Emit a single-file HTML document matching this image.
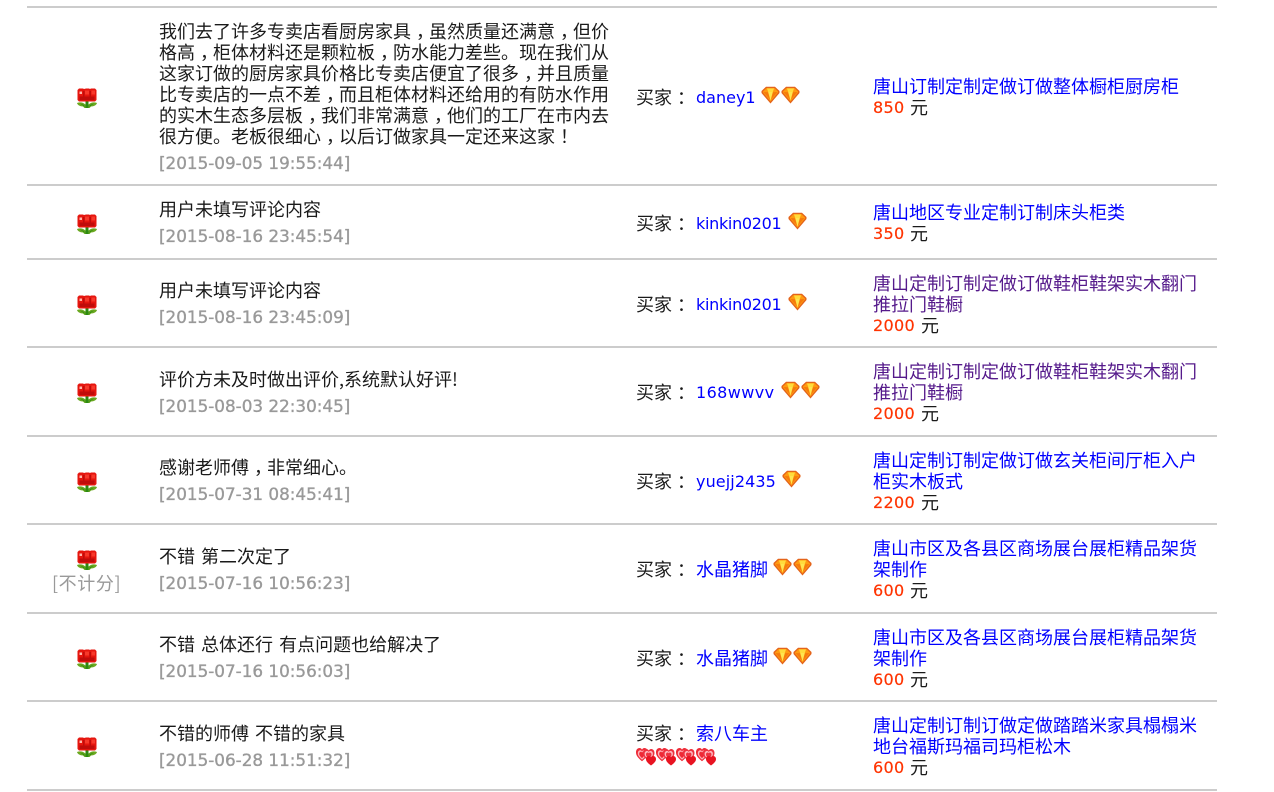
<!DOCTYPE html>
<html><head><meta charset="utf-8"><style>
html,body{margin:0;padding:0;background:#fff}
body{width:1274px;height:792px;overflow:hidden;position:relative;font-family:"DejaVu Sans","Noto Sans CJK SC",sans-serif;font-size:16px;color:#1a1a1a}
.l{position:absolute;left:27px;width:1190px;height:2px;background:#ccc}
.t{position:absolute;white-space:nowrap;line-height:21px;height:21px}
.c{font-family:"Noto Sans CJK SC",sans-serif;font-size:18px;word-spacing:2px}
.c i{font-style:normal;position:relative;left:5px}
.d{color:#999;font-size:16.8px;-webkit-text-stroke:.35px #999}
.b{color:#00f}.v{color:#551a8b}
.r{color:#f30;letter-spacing:.3px;-webkit-text-stroke:.2px #f30}
.k{letter-spacing:-.3px}
svg{position:absolute}
</style></head><body>
<svg width="0" height="0" style="position:absolute"><defs>
<g id="f">
<path fill="#6aa820" d="M0 15c3-1.200 6-.8 8.500 1.500l.5 3.500h2l.5-3.500c2.500-2.300 5.500-2.700 8.500-1.500-.5 2-3 3.500-6 3.500l-1.500 1.500H7.500L6 18.500c-3 0-5.500-1.500-6-3.500z"/>
<path fill="#2c8a12" d="M8.500 13h3v7h-3zM3 15.500l4 1.500 1 2zM17 15.500l-4 1.500-1 2z"/>
<path fill="#e5150e" d="M.5 2 2 .5h4l1 .5 2-.5h3l1 .5 1-.5h4L19.500 2v10l-1.500 1.500H2L.5 12z"/>
<path fill="#c00c0a" d="M2.500 8.500h15v3.500h-15zM6 3h1.500v5.500H6zM12.500 3H14v5.500h-1.500z"/>
<path fill="#f7382a" d="M8 2.500h4v4H8zM14.500 2.500H18v4h-3.500z"/>
<path fill="#ffb8ac" d="M2.500 3.500h2.500v2.500H2.500z"/>
</g>
<g id="g">
<path fill="#e4641a" d="M.5 5 5 .8h9L18.500 5v2l-9 10.500L.5 7z"/>
<path fill="#ff9a10" d="M2 5.500 5.600 2h7.800L17 5.500v1l-7.500 9-7.500-9z"/>
<path fill="#ffdc3c" d="M6 2.500h7L11.800 6H7.200z"/>
<path fill="#ffe650" d="M7.200 6h4.600l-2.300 8.500z"/>
<path fill="#f57a0c" d="M2.500 6 7 6.200l2 7.300zM16.500 6 12 6.200l-2 7.300z"/>
</g>
<path id="hp" d="M5 9.500C1 6.500 0 5 0 3 0 1 1.500 0 3 0c1 0 1.600.5 2 1.200C5.400.5 6 0 7 0c1.500 0 3 1 3 3 0 2-1 3.500-5 6.500z"/>
<g id="h">
<use href="#hp" transform="scale(1.2 1.4)" fill="#ee2a36"/>
<use href="#hp" transform="translate(1.800 2.200) scale(.85 1)" fill="#ffb0b8"/>
<use href="#hp" transform="translate(3.200 3.800) scale(.57 .66)" fill="#ee2a36"/>
<use href="#hp" transform="translate(7 1) scale(1.15 1.3)" fill="#ee3340"/>
<use href="#hp" transform="translate(8.600 3) scale(.83 .92)" fill="#ffb8c0"/>
<use href="#hp" transform="translate(10 4.500) scale(.55 .62)" fill="#ee3340"/>
<use href="#hp" transform="translate(10 8) scale(1 1)" fill="#e81422"/>
</g>
</defs></svg>
<div class="l" style="top:6px"></div><div class="l" style="top:184px"></div><div class="l" style="top:258px"></div><div class="l" style="top:346px"></div><div class="l" style="top:435px"></div><div class="l" style="top:523px"></div><div class="l" style="top:612px"></div><div class="l" style="top:700px"></div><div class="l" style="top:789px"></div>

<svg style="left:77px;top:88px" width="20" height="20"><use href="#f"/></svg>
<svg style="left:77px;top:214px" width="20" height="20"><use href="#f"/></svg>
<svg style="left:77px;top:295px" width="20" height="20"><use href="#f"/></svg>
<svg style="left:77px;top:383px" width="20" height="20"><use href="#f"/></svg>
<svg style="left:77px;top:472px" width="20" height="20"><use href="#f"/></svg>
<svg style="left:77px;top:550px" width="20" height="20"><use href="#f"/></svg>
<svg style="left:77px;top:649px" width="20" height="20"><use href="#f"/></svg>
<svg style="left:77px;top:737px" width="20" height="20"><use href="#f"/></svg>
<div class="t c" style="left:52px;top:573px;color:#999;letter-spacing:.6px">[不计分]</div>

<div class="t c" style="left:159px;top:21px">我们去了许多专卖店看厨房家具<i>，</i>虽然质量还满意<i>，</i>但价</div>
<div class="t c" style="left:159px;top:42px">格高<i>，</i>柜体材料还是颗粒板<i>，</i>防水能力差些。现在我们从</div>
<div class="t c" style="left:159px;top:63px">这家订做的厨房家具价格比专卖店便宜了很多<i>，</i>并且质量</div>
<div class="t c" style="left:159px;top:84px">比专卖店的一点不差<i>，</i>而且柜体材料还给用的有防水作用</div>
<div class="t c" style="left:159px;top:105px">的实木生态多层板<i>，</i>我们非常满意<i>，</i>他们的工厂在市内去</div>
<div class="t c" style="left:159px;top:126px">很方便。老板很细心<i>，</i>以后订做家具一定还来这家<i>！</i></div>
<div class="t d" style="left:159px;top:153px">[2015-09-05 19:55:44]</div>
<div class="t c" style="left:159px;top:199px">用户未填写评论内容</div>
<div class="t d" style="left:159px;top:226px">[2015-08-16 23:45:54]</div>
<div class="t c" style="left:159px;top:280px">用户未填写评论内容</div>
<div class="t d" style="left:159px;top:307px">[2015-08-16 23:45:09]</div>
<div class="t c" style="left:159px;top:369px">评价方未及时做出评价,系统默认好评!</div>
<div class="t d" style="left:159px;top:396px">[2015-08-03 22:30:45]</div>
<div class="t c" style="left:159px;top:457px">感谢老师傅<i>，</i>非常细心。</div>
<div class="t d" style="left:159px;top:484px">[2015-07-31 08:45:41]</div>
<div class="t c" style="left:159px;top:546px">不错 第二次定了</div>
<div class="t d" style="left:159px;top:573px">[2015-07-16 10:56:23]</div>
<div class="t c" style="left:159px;top:634px">不错 总体还行 有点问题也给解决了</div>
<div class="t d" style="left:159px;top:661px">[2015-07-16 10:56:03]</div>
<div class="t c" style="left:159px;top:723px">不错的师傅 不错的家具</div>
<div class="t d" style="left:159px;top:750px">[2015-06-28 11:51:32]</div>

<div class="t c" style="left:636px;top:87px">买家<i>：</i></div><div class="t b" style="left:696px;top:87px">daney1</div>
<svg style="left:761px;top:86px" width="20" height="18"><use href="#g"/></svg><svg style="left:781px;top:86px" width="20" height="18"><use href="#g"/></svg>
<div class="t c" style="left:636px;top:213px">买家<i>：</i></div><div class="t b k" style="left:696px;top:213px">kinkin0201</div>
<svg style="left:788px;top:212px" width="20" height="18"><use href="#g"/></svg>
<div class="t c" style="left:636px;top:294px">买家<i>：</i></div><div class="t b k" style="left:696px;top:294px">kinkin0201</div>
<svg style="left:788px;top:293px" width="20" height="18"><use href="#g"/></svg>
<div class="t c" style="left:636px;top:382px">买家<i>：</i></div><div class="t b" style="left:696px;top:382px;letter-spacing:.4px">168wwvv</div>
<svg style="left:781px;top:381px" width="20" height="18"><use href="#g"/></svg><svg style="left:801px;top:381px" width="20" height="18"><use href="#g"/></svg>
<div class="t c" style="left:636px;top:471px">买家<i>：</i></div><div class="t b" style="left:696px;top:471px;letter-spacing:.1px">yuejj2435</div>
<svg style="left:782px;top:470px" width="20" height="18"><use href="#g"/></svg>
<div class="t c" style="left:636px;top:559px">买家<i>：</i></div><div class="t c b" style="left:696px;top:559px">水晶猪脚</div>
<svg style="left:773px;top:558px" width="20" height="18"><use href="#g"/></svg><svg style="left:793px;top:558px" width="20" height="18"><use href="#g"/></svg>
<div class="t c" style="left:636px;top:648px">买家<i>：</i></div><div class="t c b" style="left:696px;top:648px">水晶猪脚</div>
<svg style="left:773px;top:647px" width="20" height="18"><use href="#g"/></svg><svg style="left:793px;top:647px" width="20" height="18"><use href="#g"/></svg>
<div class="t c" style="left:636px;top:723px">买家<i>：</i></div><div class="t c b" style="left:696px;top:723px">索八车主</div>
<svg style="left:636px;top:748px" width="20" height="18"><use href="#h"/></svg><svg style="left:656px;top:748px" width="20" height="18"><use href="#h"/></svg><svg style="left:676px;top:748px" width="20" height="18"><use href="#h"/></svg><svg style="left:696px;top:748px" width="20" height="18"><use href="#h"/></svg>

<div class="t c b" style="left:873px;top:76px">唐山订制定制定做订做整体橱柜厨房柜</div>
<div class="t r" style="left:873px;top:97px">850</div><div class="t c" style="left:910px;top:97px">元</div>
<div class="t c b" style="left:873px;top:202px">唐山地区专业定制订制床头柜类</div>
<div class="t r" style="left:873px;top:223px">350</div><div class="t c" style="left:910px;top:223px">元</div>
<div class="t c v" style="left:873px;top:273px">唐山定制订制定做订做鞋柜鞋架实木翻门</div>
<div class="t c v" style="left:873px;top:294px">推拉门鞋橱</div>
<div class="t r" style="left:873px;top:315px">2000</div><div class="t c" style="left:921px;top:315px">元</div>
<div class="t c v" style="left:873px;top:361px">唐山定制订制定做订做鞋柜鞋架实木翻门</div>
<div class="t c v" style="left:873px;top:382px">推拉门鞋橱</div>
<div class="t r" style="left:873px;top:403px">2000</div><div class="t c" style="left:921px;top:403px">元</div>
<div class="t c b" style="left:873px;top:450px">唐山定制订制定做订做玄关柜间厅柜入户</div>
<div class="t c b" style="left:873px;top:471px">柜实木板式</div>
<div class="t r" style="left:873px;top:492px">2200</div><div class="t c" style="left:921px;top:492px">元</div>
<div class="t c b" style="left:873px;top:538px">唐山市区及各县区商场展台展柜精品架货</div>
<div class="t c b" style="left:873px;top:559px">架制作</div>
<div class="t r" style="left:873px;top:580px">600</div><div class="t c" style="left:910px;top:580px">元</div>
<div class="t c b" style="left:873px;top:627px">唐山市区及各县区商场展台展柜精品架货</div>
<div class="t c b" style="left:873px;top:648px">架制作</div>
<div class="t r" style="left:873px;top:669px">600</div><div class="t c" style="left:910px;top:669px">元</div>
<div class="t c b" style="left:873px;top:715px">唐山定制订制订做定做踏踏米家具榻榻米</div>
<div class="t c b" style="left:873px;top:736px">地台福斯玛福司玛柜松木</div>
<div class="t r" style="left:873px;top:757px">600</div><div class="t c" style="left:910px;top:757px">元</div>
</body></html>
